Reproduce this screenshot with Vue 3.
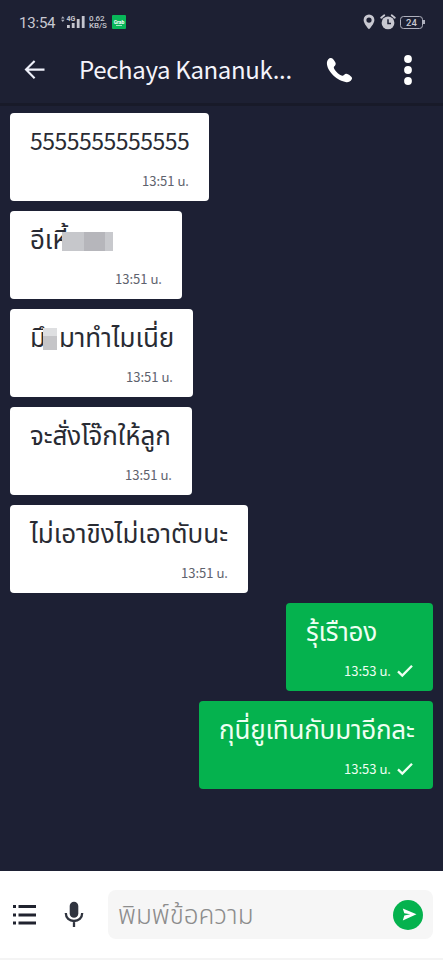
<script setup>
const messages = [
  { id: 'm1', text: '5555555555555', time: '13:51 น.', width: 199, numeric: true },
  { id: 'm2', text: 'อีเหี้', time: '13:51 น.', width: 172, mask: 'long' },
  { id: 'm3', text: 'มึ', rest: 'มาทำไมเนี่ย', time: '13:51 น.', width: 183, mask: 'short' },
  { id: 'm4', text: 'จะสั่งโจ๊กให้ลูก', time: '13:51 น.', width: 182 },
  { id: 'm5', text: 'ไม่เอาขิงไม่เอาตับนะ', time: '13:51 น.', width: 238 },
  { id: 'm6', text: 'รุ้เรืาอง', time: '13:53 น.', width: 147, sent: true },
  { id: 'm7', text: 'กุนี่ยูเทินกับมาอีกละ', time: '13:53 น.', width: 234, sent: true },
]
</script>

<template>
  <main class="screen">
    <header class="top">
      <div class="status">
        <span class="clock">13:54</span>
        <svg class="signal" width="24" height="16" viewBox="0 0 24 16">
          <path d="M0 4.4l1.8-2.2 1.8 2.2zM0 5.8h3.6L1.8 8z" fill="#aeb0bd" />
          <text x="5.5" y="7" class="net">4G</text>
          <path d="M6 11h2.8v3H6zM10.8 9h2.8v5h-2.8zM15.8 5h2.8v9h-2.8zM20.8 2h2.8v12h-2.8z" fill="#c4c5ce" />
        </svg>
        <span class="speed"><span>0.62</span><span>KB/S</span></span>
        <span class="grab"><b>Grab</b><i></i></span>
        <span class="spacer"></span>
        <svg class="pin" width="12" height="16" viewBox="0 0 12 16"><path fill="#c8c8d1" fill-rule="evenodd" d="M6 .5a5.4 5.4 0 0 0-5.4 5.4C.6 9.8 6 15.2 6 15.2s5.4-5.4 5.4-9.3A5.4 5.4 0 0 0 6 .5zm0 3a2.6 2.6 0 1 1 0 5.2 2.6 2.6 0 0 1 0-5.2z" /></svg>
        <svg class="alarm" width="16" height="16" viewBox="0 0 16 16"><circle cx="8" cy="8.9" r="6.4" fill="#c8c8d1" /><path d="M1.2 3.7 4.3 1.2M14.8 3.7l-3.1-2.5" stroke="#c8c8d1" stroke-width="1.8" stroke-linecap="round" /><path d="M8 5.2v4.2h3" fill="none" stroke="#1d2034" stroke-width="1.5" /></svg>
        <span class="battery">24</span>
      </div>
      <div class="nav">
        <svg class="back" width="22" height="22" viewBox="0 0 22 22"><path d="M10.6 2 2 10.6l8.6 8.7M2.3 10.6H20.5" fill="none" stroke="#eef0fa" stroke-width="2.1" /></svg>
        <h1><span>Pechaya Kananuk...</span></h1>
        <svg class="phone" width="27" height="27" viewBox="0 0 27 27"><path fill="#fff" d="M1 5C1.4 2.6 3 1 4.6.9c1.6-.2 2.5.9 3.9 3 1.1 1.6 1.6 2.9.9 4.100-.5.9-1.500 1.500-1.600 2.500-.1 1.400 2.100 4.200 4 5.800 1.900 1.600 3.800 2.700 5 2.500 1.300-.2 1.700-1.900 3.300-2 1.200-.1 3.400 1.400 4.600 2.400 1.500 1.200 1.600 2.200.9 3.400-1.100 1.900-3.100 2.800-5.200 2.600C11.300 24.200-.3 13.400 1 5z" /></svg>
        <svg class="more" width="10" height="32" viewBox="0 0 10 32"><g fill="#fff"><circle cx="5" cy="5" r="3.9" /><circle cx="5" cy="16" r="3.9" /><circle cx="5" cy="27" r="3.9" /></g></svg>
      </div>
    </header>

    <section class="chat">
      <article v-for="m in messages" :key="m.id" class="bubble" :class="{ sent: m.sent }" :style="{ width: m.width + 'px' }">
        <p class="text" :class="{ numeric: m.numeric }">
          <span>{{ m.text }}</span><span v-if="m.rest" class="rest">{{ m.rest }}</span>
          <i v-if="m.mask" class="mask" :class="m.mask"></i>
        </p>
        <div class="meta">
          <time>{{ m.time }}</time>
          <svg v-if="m.sent" width="17" height="14" viewBox="0 0 17 14"><path d="m2 7.4 4.3 4.2L16 1.8" fill="none" stroke="#effff2" stroke-width="2.3" /></svg>
        </div>
      </article>
    </section>

    <footer class="composer">
      <svg class="list" width="23" height="22" viewBox="0 0 23 22"><path fill="#20232f" d="M0 1h3v3H0zM5.5 1H23v3H5.5zM0 9.4h3v3H0zM5.5 9.4H23v3H5.5zM0 17.6h3v3H0zM5.5 17.6H23v3H5.5z" /></svg>
      <svg class="mic" width="20" height="27" viewBox="0 0 20 27"><rect x="5.7" y=".7" width="8.6" height="16" rx="4.3" fill="#30343f" /><path d="M1.8 12c0 5 3.6 8 8.2 8s8.2-3 8.2-8M10 20v6" fill="none" stroke="#30343f" stroke-width="2.3" /></svg>
      <div class="field">
        <span class="hint">พิมพ์ข้อความ</span>
        <span class="send"><svg width="15" height="13" viewBox="0 0 15 13"><path fill="#fff" d="M.8.5 14.5 6.3.8 12.4l1.5-4.8 6-1.3-6-1.1z" /></svg></span>
      </div>
    </footer>
  </main>
</template>

<style>
body { margin: 0; background: #1d2034; }
</style>

<style scoped>
* { box-sizing: border-box; }
svg { display: block; flex: none; }
.screen { width: 443px; height: 960px; display: flex; flex-direction: column; overflow: hidden; background: #1d2034; font-family: "Noto Sans Thai", "Noto Sans", sans-serif; }
.top { height: 106px; flex: none; background: #1d2033; border-bottom: 3px solid #181a29; }
.status { height: 44px; display: flex; align-items: center; padding: 0 19px; color: #c8c8d1; font-family: Roboto, sans-serif; }
.clock { width: 42px; font-size: 15px; line-height: 18px; letter-spacing: -.2px; padding-top: 1px; }
.net { font: 700 7px Roboto, sans-serif; fill: #c4c5ce; }
.speed { display: flex; flex-direction: column; margin-left: 4px; width: 23px; font-size: 8px; font-weight: 500; line-height: 7.5px; letter-spacing: -.1px; }
.grab { width: 14px; height: 14px; border-radius: 1px; background: #08b759; color: #fff; display: flex; flex-direction: column; align-items: center; justify-content: center; }
.grab b { font-size: 5px; line-height: 6px; }
.grab i { width: 6px; height: 1px; background: #a5e8c3; }
.spacer { flex: 1; }
.alarm { margin: 0 4px 0 5px; }
.battery { position: relative; width: 23px; height: 13px; margin-right: 1px; border: 1px solid #aeb0bd; border-radius: 3.5px; text-align: center; font-size: 9.5px; line-height: 11.5px; font-weight: 500; }
.battery::after { content: ""; position: absolute; right: -3px; top: 3px; width: 2px; height: 4px; background: #aeb0bd; }
.nav { display: flex; height: 52px; align-items: center; padding-left: 24px; }
h1 { width: 224px; margin: -2px 0 0 33px; color: #f4f4fb; font-family: "Noto Sans CJK SC", sans-serif; font-size: 24px; font-weight: 400; line-height: 34px; letter-spacing: -.35px; white-space: nowrap; }
.phone { margin-left: 23px; }
.more { margin-left: 50px; }
.chat { flex: 1; display: flex; flex-direction: column; align-items: flex-start; gap: 10px; padding: 7px 10px 0; }
.bubble { height: 88px; flex: none; display: flex; flex-direction: column; padding: 12px 20px 0; border-radius: 4px; background: #fff; color: #292b33; }
.sent { align-self: flex-end; background: #05b24e; color: #effff2; }
.text { position: relative; height: 36px; margin: 0; font-size: 26px; line-height: 37px; letter-spacing: -.05px; white-space: nowrap; }
.sent .text { letter-spacing: -.2px; }
.numeric { font-family: "Noto Sans CJK SC", sans-serif; font-size: 23px; line-height: 31px; letter-spacing: -.52px; }
.rest { margin-left: 13px; }
.mask { position: absolute; }
.long { left: 32px; top: 9px; width: 51px; height: 19px; background: linear-gradient(90deg, #c6c7cb 0 22px, #b6b6bb 22px 43px, #c8c9cd 43px); }
.short { left: 13px; top: 7px; width: 14px; height: 22px; background: linear-gradient(#dedfe1 0 8px, #c5c5c8 8px); }
.meta { display: flex; align-items: center; justify-content: flex-end; gap: 5px; height: 24px; margin-top: 8px; font-family: "Noto Sans CJK SC", "Noto Sans Thai", sans-serif; font-size: 13px; line-height: 24px; color: #5e626d; white-space: nowrap; }
.sent .meta { color: #effff2; }
.composer { flex: none; height: 89px; display: flex; align-items: center; padding: 0 10px 0 13px; background: #fff; border-bottom: 2px solid #f4f4f4; }
.mic { margin-left: 28px; }
.field { display: flex; align-items: center; width: 325px; height: 49px; margin-left: 24px; padding: 0 10px; border-radius: 8px; background: #f6f6f6; }
.hint { flex: 1; padding-top: 3px; color: #8c8c8c; font-size: 26px; font-weight: 300; line-height: 38px; white-space: nowrap; }
.send { width: 30px; height: 30px; border-radius: 50%; background: #05b24e; display: flex; align-items: center; justify-content: center; padding-left: 2px; }
</style>
